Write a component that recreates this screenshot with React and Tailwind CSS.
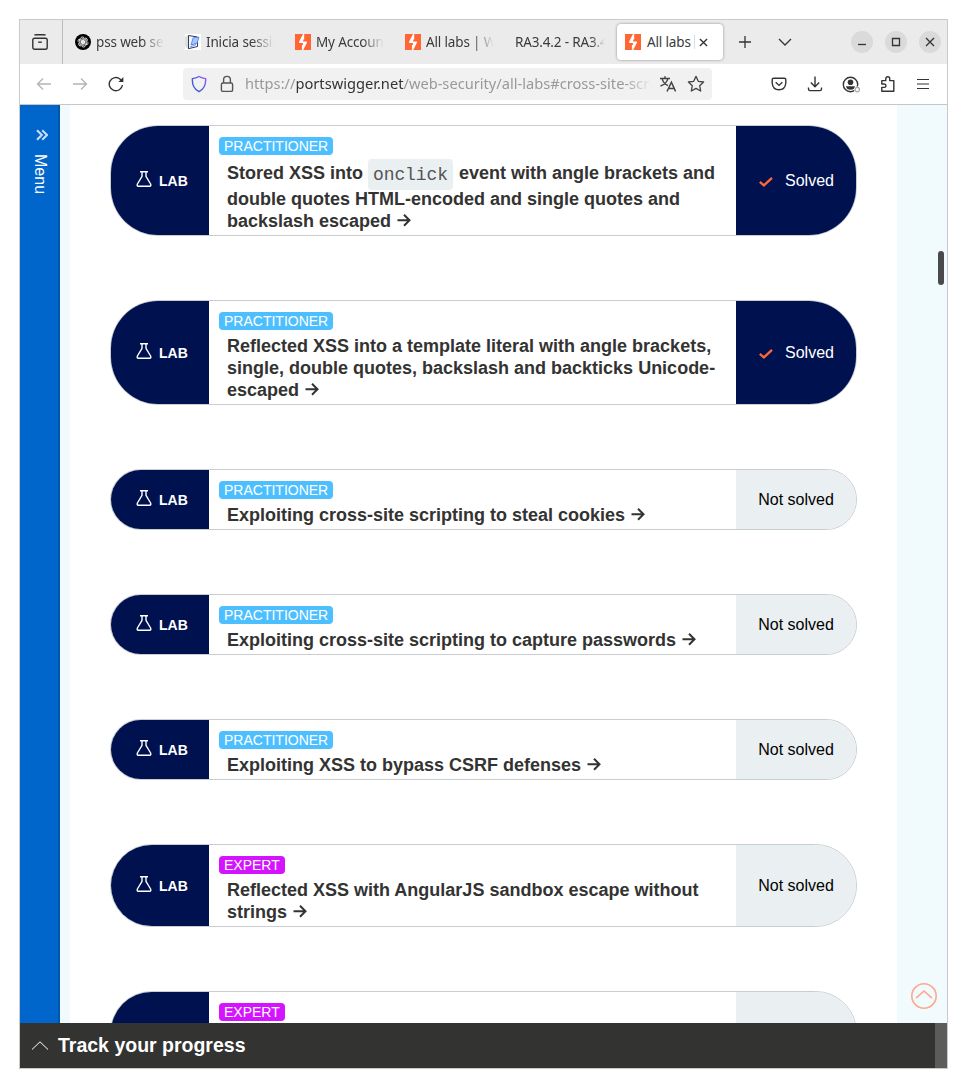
import React from "react";

const swigger = (
  <svg viewBox="0 0 16 16" className="h-4 w-4 shrink-0">
    <rect width="16" height="16" fill="#ff6633" />
    <path d="M8 0H9.2V5.4H8.2V7.4H11.9V8.8L8.2 16H6.9V10.9H7.9V8.9H4.2V7.4Z" fill="#fff" />
  </svg>
);

const gpt = (
  <svg viewBox="0 0 16 16" className="h-4 w-4 shrink-0">
    <circle cx="8" cy="8" r="8" fill="#000" />
    <g fill="none" stroke="#fff" strokeWidth="0.75">
      <path id="petal" d="M8 7.9L5.6 6.5V4.6Q5.7 3.1 7.2 2.9Q8.1 2.8 8.9 3.5L6.8 4.7V9.6" />
      <use href="#petal" transform="rotate(60 8 8)" />
      <use href="#petal" transform="rotate(120 8 8)" />
      <use href="#petal" transform="rotate(180 8 8)" />
      <use href="#petal" transform="rotate(240 8 8)" />
      <use href="#petal" transform="rotate(300 8 8)" />
    </g>
  </svg>
);

const moodle = (
  <svg viewBox="0 0 16 16" className="h-4 w-4 shrink-0">
    <rect width="16" height="16" fill="#fff" />
    <path d="M0 3Q2 1 3 1V15Q1 14 0 12Z" fill="#ddd" />
    <path d="M3.5 1.5L12.5 3V12.5L3.5 14.7Z" fill="#f3f6ff" stroke="#333b55" strokeWidth="1" />
    <path d="M8.2 3.8L14 3.2L12 9L6 11Z" fill="#a9c7ff" stroke="#5a8bea" strokeWidth="1" />
    <path d="M5 13L11 10.5" stroke="#6b95ec" strokeWidth="1" />
  </svg>
);

function Tab({ icon, label, active }) {
  if (active) {
    return (
      <div className="ml-1 flex h-9 w-[106px] shrink-0 items-center rounded bg-white pl-2 shadow-[0_0_3px_rgba(0,0,0,0.4)]">
        {icon}
        <span className="ml-[6px] w-[47px] overflow-hidden whitespace-nowrap">{label}</span>
        <span className="h-[14px] w-px bg-[#dedede]" />
        <svg viewBox="0 0 10 10" className="ml-1 h-[9px] w-[9px] shrink-0" fill="none" stroke="#333" strokeWidth="1.5">
          <path d="M1 1L9 9M9 1L1 9" />
        </svg>
      </div>
    );
  }
  return (
    <div className="flex w-[110px] shrink-0 items-center pl-3">
      {icon}
      <span
        className={
          (icon
            ? "ml-[5px] w-[68px] [mask-image:linear-gradient(to_right,#000_calc(100%-22px),transparent)]"
            : "w-[90px] [mask-image:linear-gradient(to_right,#000_calc(100%-14px),transparent)]") +
          " overflow-hidden whitespace-nowrap"
        }
      >
        {label}
      </span>
    </div>
  );
}

function WinButton({ children }) {
  return (
    <div className="flex h-[22px] w-[22px] items-center justify-center rounded-full bg-[#dadada]">
      <svg viewBox="0 0 22 22" className="h-[22px] w-[22px]" fill="none" stroke="#333" strokeWidth="1.3">
        {children}
      </svg>
    </div>
  );
}

function TabBar() {
  return (
    <div className="flex h-11 items-center bg-[#ebebeb] text-[13.5px] tracking-[-0.15px] text-[#3a3a3a]">
      <div className="flex h-11 w-[43px] shrink-0 items-center border-r border-[#bcbcbc] pl-3">
        <svg viewBox="0 0 16 16" className="h-4 w-4" fill="none" stroke="#333" strokeWidth="1.4">
          <path d="M2.5 1.2Q3 .7 4 .7H12Q13 .7 13.5 1.2" />
          <rect x="0.8" y="4.2" width="14.4" height="11" rx="1.8" />
          <path d="M6.2 8.2H9.8" />
        </svg>
      </div>
      <Tab icon={gpt} label="pss web security" />
      <Tab icon={moodle} label="Inicia sessió" />
      <Tab icon={swigger} label="My Account" />
      <Tab icon={swigger} label="All labs | Web" />
      <Tab label="RA3.4.2 - RA3.4" />
      <Tab icon={swigger} label="All labs" active />
      <svg viewBox="0 0 12 12" className="ml-4 h-3 w-3 shrink-0" stroke="#333" strokeWidth="1.3">
        <path d="M6 0V12M0 6H12" />
      </svg>
      <svg viewBox="0 0 14 8" className="ml-[27px] h-2 w-[14px] shrink-0" fill="none" stroke="#333" strokeWidth="1.3">
        <path d="M1 1L7 7L13 1" />
      </svg>
      <div className="ml-[59px] flex gap-3">
        <WinButton><path d="M7 13.5H15" /></WinButton>
        <WinButton><path d="M7.5 7.5H14.5V14.5H7.5Z" /></WinButton>
        <WinButton><path d="M7 7L15 15M15 7L7 15" /></WinButton>
      </div>
    </div>
  );
}

function NavBar() {
  return (
    <div className="flex h-[41px] items-center border-b border-[#c6c6c6] bg-white pl-4 text-[#333]">
      <svg viewBox="0 0 16 16" className="h-4 w-4" fill="none" stroke="#b4b4b4" strokeWidth="1.3">
        <path d="M15 8H1.5M7 2.5L1.5 8L7 13.5" />
      </svg>
      <svg viewBox="0 0 16 16" className="ml-5 h-4 w-4" fill="none" stroke="#b4b4b4" strokeWidth="1.3">
        <path d="M1 8H14.5M9 2.5L14.5 8L9 13.5" />
      </svg>
      <svg viewBox="0 0 16 16" className="ml-5 h-4 w-4" fill="none" stroke="#333" strokeWidth="1.4">
        <path d="M14.4 9A6.6 6.6 0 1 1 12.2 3.2L14 5" />
        <path d="M15.4 1V6H10.4Z" fill="#333" stroke="none" />
      </svg>
      <div className="ml-[59px] flex h-8 w-[529px] items-center rounded bg-[#f1f1f1] pl-2">
        <svg viewBox="0 0 16 18" className="h-[18px] w-4" fill="none" stroke="url(#sh)" strokeWidth="1.4">
          <defs>
            <linearGradient id="sh" x1="0" y1="1" x2="1" y2="0">
              <stop offset="0.3" stopColor="#3b5bdb" />
              <stop offset="1" stopColor="#9059ff" />
            </linearGradient>
          </defs>
          <path d="M8 1.5Q11 3.3 14.6 3.6Q15.3 12.8 8 16.6Q.7 12.8 1.4 3.6Q5 3.3 8 1.5Z" />
        </svg>
        <svg viewBox="0 0 14 18" className="ml-[13px] h-[18px] w-[14px]" fill="none" stroke="#555" strokeWidth="1.4">
          <path d="M3.6 8V4.8Q3.6 1.4 7 1.4T10.4 4.8V8" />
          <rect x="1.4" y="8" width="11.2" height="8.4" rx="1.5" />
        </svg>
        <div className="ml-[11px] w-[407px] overflow-hidden whitespace-nowrap text-[14.65px] text-[#999] [mask-image:linear-gradient(to_right,#000_calc(100%-28px),transparent)]">
          https://<span className="text-[#333]">portswigger.net</span>/web-security/all-labs#cross-site-scripting
        </div>
        <svg viewBox="0 0 16 16" className="ml-2 h-4 w-4 shrink-0" fill="none" stroke="#444" strokeWidth="1.5">
          <path d="M0 2.4H10M5 .3V2.4M2 2.4Q3.5 8 8 9.5M8 2.4Q6.5 8 .5 10" />
          <path d="M7 15.5L11.4 6.3L15.6 15.5M8.6 12.6H14.2" />
        </svg>
        <svg viewBox="0 0 18 18" className="ml-[11px] h-[18px] w-[18px] shrink-0" fill="none" stroke="#444" strokeWidth="1.3" strokeLinejoin="round">
          <path d="M9 1.4L11.3 6.3L16.6 7L12.7 10.7L13.7 16L9 13.4L4.3 16L5.3 10.7L1.4 7L6.7 6.3Z" />
        </svg>
      </div>
      <svg viewBox="0 0 16 16" className="ml-[59px] h-4 w-4" fill="none" stroke="#333" strokeWidth="1.4">
        <path d="M2.6 2.2H13.4Q14.8 2.2 14.8 3.6V7Q14.2 13.8 8 13.8T1.2 7V3.6Q1.2 2.2 2.6 2.2Z" />
        <path d="M4.7 6.3L8 9.4L11.3 6.3" />
      </svg>
      <svg viewBox="0 0 16 16" className="ml-5 h-4 w-4" fill="none" stroke="#333" strokeWidth="1.4">
        <path d="M8 .5V10.5M3.8 6.5L8 10.7L12.2 6.5M1.5 11.5V13Q1.5 14.6 3 14.6H13Q14.5 14.6 14.5 13V11.5" />
      </svg>
      <svg viewBox="0 0 19 17" className="ml-[19px] h-[17px] w-[19px]" fill="none">
        <circle cx="8.5" cy="8.5" r="7.2" stroke="#333" strokeWidth="1.4" />
        <circle cx="8.5" cy="6.2" r="2.8" fill="#333" />
        <path d="M4 10.3H13Q12.5 13.8 8.5 13.8T4 10.3Z" fill="#333" />
        <circle cx="15.3" cy="13.6" r="3.2" fill="#fff" />
        <circle cx="15.3" cy="13.6" r="2.2" stroke="#aaa" strokeWidth="1.2" />
      </svg>
      <svg viewBox="0 0 16 18" className="ml-[19px] h-[18px] w-4" fill="none" stroke="#333" strokeWidth="1.4" strokeLinejoin="round">
        <path d="M1.8 16.2V12.4H4.2Q6 12.3 6 10.7T4.2 9H1.8V5.6H5.8V3.7Q5.9 1.7 7.8 1.7T9.7 3.7V5.6H13.8V16.2Z" />
      </svg>
      <svg viewBox="0 0 12 12" className="ml-[21px] h-3 w-3" stroke="#333" strokeWidth="1.2">
        <path d="M0 1.5H12M0 6H12M0 10.5H12" />
      </svg>
    </div>
  );
}

const arrow = (
  <svg viewBox="0 0 14 14" className="ml-[6px] inline-block h-[14px] w-[14px] align-[-1px]" fill="none" stroke="#333332" strokeWidth="2">
    <path d="M0.5 6.3H12.3M7 0.8L12.5 6.3L7 11.8" />
  </svg>
);

const labs = [
  {
    title: (
      <>
        <span className="-mt-px mb-px flex h-[28px] items-center">
          Stored XSS into
          <code className="mr-[6px] ml-[5px] mt-[3px] flex h-[31px] items-center rounded bg-[#eaeff2] px-[5px] font-['Liberation_Mono',monospace] text-[18px] font-normal tracking-[-0.1px] text-[#555]">
            onclick
          </code>
          event with angle brackets and
        </span>
        double quotes HTML-encoded and single quotes and
        <br />
        backslash escaped
      </>
    ),
    solved: true,
  },
  {
    title: (
      <>
        Reflected XSS into a template literal with angle brackets,
        <br />
        single, double quotes, backslash and backticks Unicode-
        <br />
        escaped
      </>
    ),
    solved: true,
  },
  { title: "Exploiting cross-site scripting to steal cookies" },
  { title: "Exploiting cross-site scripting to capture passwords" },
  { title: "Exploiting XSS to bypass CSRF defenses" },
  {
    title: (
      <>
        Reflected XSS with AngularJS sandbox escape without
        <br />
        strings
      </>
    ),
    expert: true,
  },
  { title: null, expert: true },
];

function LabCard({ title, solved, expert }) {
  return (
    <div className="flex min-h-[83px] shrink-0 overflow-hidden rounded-[48px] border border-[#c9cdce] bg-white has-[[data-short]]:min-h-0">
      <div className="flex w-[98px] items-center bg-[#00114f] pl-[25px] text-sm font-bold text-white">
        {title && (
          <>
            <svg viewBox="0 0 16 16" className="mb-[3px] h-4 w-4" fill="none" stroke="#fff" strokeWidth="1.4" strokeLinejoin="round">
              <path d="M4 .8H12M6 .8V5.3L1.4 13Q.6 15.2 2.4 15.2H13.6Q15.4 15.2 14.6 13L10 5.3V.8" />
            </svg>
            <span className="ml-[7px]">LAB</span>
          </>
        )}
      </div>
      <div className="w-[527px] pt-[11px] pb-[3px] pl-[10px]" data-short={typeof title === "string" ? "" : undefined}>
        <div
          className={
            (expert ? "bg-[#d414ff]" : "bg-[#4dbfff]") +
            " h-[18px] w-fit rounded-[4px] px-[5px] text-sm leading-[18px] text-white"
          }
        >
          {expert ? "EXPERT" : "PRACTITIONER"}
        </div>
        {title && (
          <div className="mt-[5px] pl-2 text-[18px] leading-[22px] font-bold whitespace-nowrap text-[#333332]">
            {title}
            {arrow}
          </div>
        )}
      </div>
      {solved ? (
        <div className="flex w-[120px] items-center bg-[#00114f] pl-[23px] text-white">
          <svg viewBox="0 0 14 10" className="mt-[2px] h-[10px] w-[14px]" fill="none" stroke="#ff6633" strokeWidth="2.3">
            <path d="M0.8 4.8L4.9 8.4L13 0.8" />
          </svg>
          <span className="ml-3">Solved</span>
        </div>
      ) : (
        <div className="flex w-[120px] items-center justify-center bg-[#eaeff2] text-black">
          {title && "Not solved"}
        </div>
      )}
    </div>
  );
}

export default function App() {
  return (
    <div className="h-[1088px] w-[967px] overflow-hidden bg-white p-[19px] font-['Liberation_Sans',Arial,sans-serif] text-base">
      <div className="relative flex h-[1050px] w-[929px] flex-col overflow-hidden border border-[#cacaca]">
        <div className="font-['Noto_Sans',sans-serif]">
          <TabBar />
          <NavBar />
        </div>
        <div className="flex min-h-0 flex-1 bg-[#f1fafd]">
          <div className="flex w-10 flex-col items-center border-r-2 border-[#0056ad] bg-[#0066cc] pt-6 text-white">
            <svg viewBox="0 0 12 12" className="ml-[6px] h-3 w-3" fill="none" stroke="#c8dcf2" strokeWidth="2.1">
              <path d="M1 1.2L5.8 6L1 10.8M6.2 1.2L11 6L6.2 10.8" />
            </svg>
            <span className="mt-[13px] ml-[2px] text-base leading-5 [writing-mode:vertical-rl]">Menu</span>
          </div>
          <div className="ml-[10px] flex w-[827px] flex-col gap-16 overflow-hidden bg-white pt-5 pr-10 pl-10">
            {labs.map((lab, i) => (
              <LabCard key={i} {...lab} />
            ))}
          </div>
        </div>
        <div className="flex h-[45px] items-center bg-[#333332] pl-3 text-[19.5px] font-bold text-white">
          <svg viewBox="0 0 16 9" className="h-[9px] w-4" fill="none" stroke="#fff" strokeWidth="1">
            <path d="M0 8.5L8 0.8L16 8.5" />
          </svg>
          <span className="ml-[10px]">Track your progress</span>
          <span className="ml-auto h-full w-3 bg-[#5c5c5b]" />
        </div>
        <div className="absolute top-[231px] right-[3px] h-[34px] w-[6px] rounded-full bg-[#4a4a4a]" />
        <svg viewBox="0 0 26 26" className="absolute top-[963px] right-[10px] h-[26px] w-[26px]" fill="none" stroke="#fba98d" strokeWidth="1.6">
          <circle cx="13" cy="13" r="12.2" />
          <path d="M5 15.2L13 8L21 15.2" />
        </svg>
      </div>
    </div>
  );
}
